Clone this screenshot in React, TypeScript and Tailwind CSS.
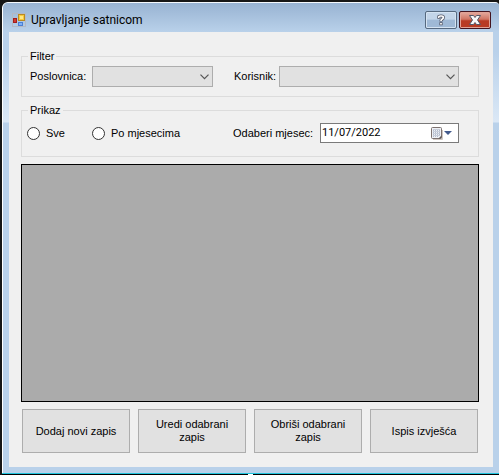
import { useState, type ReactNode } from "react";

function FormsIcon() {
  return (
    <svg width="14" height="14" viewBox="0 0 14 14" className="shrink-0" aria-hidden="true">
      <rect x="0.5" y="0.5" width="13" height="13" fill="none" stroke="#b3b9c4" />
      <rect x="6.5" y="1.5" width="6" height="6" fill="#f7c93c" stroke="#b98a22" />
      <rect x="8" y="3" width="3" height="3" fill="#ffe884" />
      <rect x="1.5" y="5.5" width="3" height="4" fill="#d03a30" stroke="#a31f1b" />
      <rect x="6.5" y="9.5" width="4" height="3" fill="#7fb0f7" stroke="#4c80d4" />
    </svg>
  );
}

function TitleBar() {
  return (
    <header className="flex h-[29px] shrink-0 items-start bg-linear-to-b from-[#98b3d2] to-[#b9d1ea] pr-2 pl-[9px]">
      <div className="flex flex-1 items-center gap-[5px] pt-[9px]">
        <FormsIcon />
        <h1 className="font-['Roboto','Noto_Sans',sans-serif] text-[12px] leading-4 text-black">
          Upravljanje satnicom
        </h1>
      </div>
      <div className="flex gap-[2px] pt-2">
        <button
          type="button"
          aria-label="Pomoć"
          className="flex h-[18px] w-8 items-center justify-center rounded-[2px] border border-[#56697f] bg-linear-to-b from-[#c3d5e9] from-45% to-[#9fb9d6] to-50% shadow-[inset_0_0_0_1px_#d5e3f2]"
        >
          <svg width="10" height="12" viewBox="0 0 10 12" aria-hidden="true">
            <path d="M1.3 3.2H2.6Q3 2 4.5 2H5.5Q7.3 2 7.3 3.5Q7.3 4.7 6 5.3Q5 5.8 5 7.4M5 8.3V11.3" fill="none" stroke="#535666" strokeWidth="3.2" />
            <path d="M2 3.2H2.6Q3 2 4.5 2H5.5Q7.3 2 7.3 3.5Q7.3 4.7 6 5.3Q5 5.8 5 7M5 9V10.6" fill="none" stroke="#ffffff" strokeWidth="1.7" />
          </svg>
        </button>
        <button
          type="button"
          aria-label="Zatvori"
          className="flex h-[18px] w-8 items-center justify-center rounded-[2px] border border-[#43141f] bg-linear-to-b from-[#e0a094] from-10% via-[#cf7463] via-45% to-[#b83a24] to-55% shadow-[inset_0_0_0_1px_#e0a297]"
        >
          <svg width="12" height="10" viewBox="0 0 12 10" aria-hidden="true">
            <path d="M0.5 0.5H4.5L6 2.5L7.5 0.5H11.5L8.5 5L11.5 9.5H7.5L6 7.5L4.5 9.5H0.5L3.5 5Z" fill="#f8f8fa" stroke="#535666" />
          </svg>
        </button>
      </div>
    </header>
  );
}

function Group({ title, children }: { title: string; children: ReactNode }) {
  return (
    <fieldset className="min-w-0 border border-[#dcdcdc]">
      <legend className="ml-[6px] px-[2px] leading-[13px]">{title}</legend>
      {children}
    </fieldset>
  );
}

function ComboBox({ id, className }: { id: string; className: string }) {
  return (
    <div className={`relative h-[21px] ${className}`}>
      <select id={id} className="block h-full w-full appearance-none border border-[#adadad] bg-[#e1e1e1] pl-1" />
      <svg width="9" height="6" viewBox="0 0 9 6" className="pointer-events-none absolute top-2 right-1" aria-hidden="true">
        <path d="M0.5 0.7L4.5 4.7L8.5 0.7" fill="none" stroke="#555555" strokeWidth="1.2" />
      </svg>
    </div>
  );
}

function Radio({ id, label, checked, onSelect }: { id: string; label: string; checked: boolean; onSelect: () => void }) {
  return (
    <div className="flex items-center gap-[6px]">
      <input
        id={id}
        type="radio"
        name="prikaz"
        checked={checked}
        onChange={onSelect}
        className="size-[13px] appearance-none rounded-full border border-[#333333] bg-white checked:border-4"
      />
      <label htmlFor={id}>{label}</label>
    </div>
  );
}

function DateBox() {
  const [date, setDate] = useState("11/07/2022");
  return (
    <div className="flex h-5 min-w-0 flex-1 items-center border border-[#7a7a7a] bg-white pr-[5px]">
      <input
        id="mjesec"
        type="text"
        value={date}
        onChange={(e) => setDate(e.target.value)}
        className="min-w-0 flex-1 pl-[1px] font-['Roboto',sans-serif] text-[11px] leading-4 outline-none"
      />
      <button type="button" aria-label="Otvori kalendar" className="shrink-0">
        <svg width="22" height="13" viewBox="0 0 22 13" className="block" aria-hidden="true">
          <path d="M2 12.5H11.5V3" fill="none" stroke="#cfc6c0" />
          <rect x="0.5" y="0.5" width="10" height="11" rx="1" fill="#eef0f5" stroke="#7d7270" />
          <path d="M2 3.5H9M2 5.5H9M2 7.5H9M2 9.5H7" stroke="#b4bccd" strokeDasharray="1 1" />
          <path d="M2 2.5H9M2 4.5H9M2 6.5H9M2 8.5H9" stroke="#c9cfdb" />
          <path d="M7.5 11.5L10.5 8.5V11.5Z" fill="#5d5452" />
          <path d="M13 4H21L17 8Z" fill="#435a8c" />
        </svg>
      </button>
    </div>
  );
}

const actions = ["Dodaj novi zapis", "Uredi odabrani zapis", "Obriši odabrani zapis", "Ispis izvješća"];

export default function App() {
  const [mode, setMode] = useState("");
  return (
    <div className="flex h-screen min-h-[320px] flex-col bg-[#161616] pt-[2px] pl-[2px] font-['Liberation_Sans',Arial,sans-serif] text-[11px] leading-[13px] text-black">
      <div className="flex min-h-0 flex-1 flex-col overflow-hidden rounded-tl-[6px] rounded-tr-[4px] border-t border-l border-white border-t-[#f4f8fc] bg-[#b9d1ea]">
        <TitleBar />
        <div className="flex min-h-0 flex-1 bg-[linear-gradient(to_bottom,#b9d1ea_0px,#b9d1ea_20px,#dbe8f6_90px,#b9d1ea_91px)] pr-[6px] pb-[6px] pl-[6px]">
          <main className="flex min-w-0 flex-1 flex-col bg-[#f0f0f0] pt-[18px] pr-[14px] pb-[14px] pl-3">
            <Group title="Filter">
              <div className="flex items-center pt-[3px] pr-[19px] pb-[9px] pl-2">
                <div className="flex w-[204px] shrink-0 items-center">
                  <label htmlFor="poslovnica" className="w-[62px]">Poslovnica:</label>
                  <ComboBox id="poslovnica" className="w-[121px]" />
                </div>
                <label htmlFor="korisnik" className="w-[45px] shrink-0">Korisnik:</label>
                <ComboBox id="korisnik" className="min-w-0 flex-1" />
              </div>
            </Group>
            <div className="pt-[7px] pb-[7px]">
              <Group title="Prikaz">
                <div className="flex items-center pt-[6px] pr-[19px] pb-[13px] pl-[5px]">
                  <div className="flex w-[206px] shrink-0 items-center">
                    <div className="w-[65px]">
                      <Radio id="sve" label="Sve" checked={mode === "sve"} onSelect={() => setMode("sve")} />
                    </div>
                    <Radio id="po-mjesecima" label="Po mjesecima" checked={mode === "mj"} onSelect={() => setMode("mj")} />
                  </div>
                  <label htmlFor="mjesec" className="w-[87px] shrink-0">Odaberi mjesec:</label>
                  <DateBox />
                </div>
              </Group>
            </div>
            <section aria-label="Zapisi" className="min-h-0 flex-1 border border-black bg-[#ababab]" />
            <div className="grid grid-cols-4 gap-2 px-[1px] pt-[7px]">
              {actions.map((label) => (
                <button key={label} type="button" className="h-11 border border-[#adadad] bg-[#e1e1e1] px-3 text-center">
                  {label}
                </button>
              ))}
            </div>
          </main>
        </div>
      </div>
      <div className="flex h-[2px] shrink-0 justify-center border-t border-[#1fc4dc] bg-black">
        <span className="h-[1px] w-[5px] bg-white" />
      </div>
    </div>
  );
}
